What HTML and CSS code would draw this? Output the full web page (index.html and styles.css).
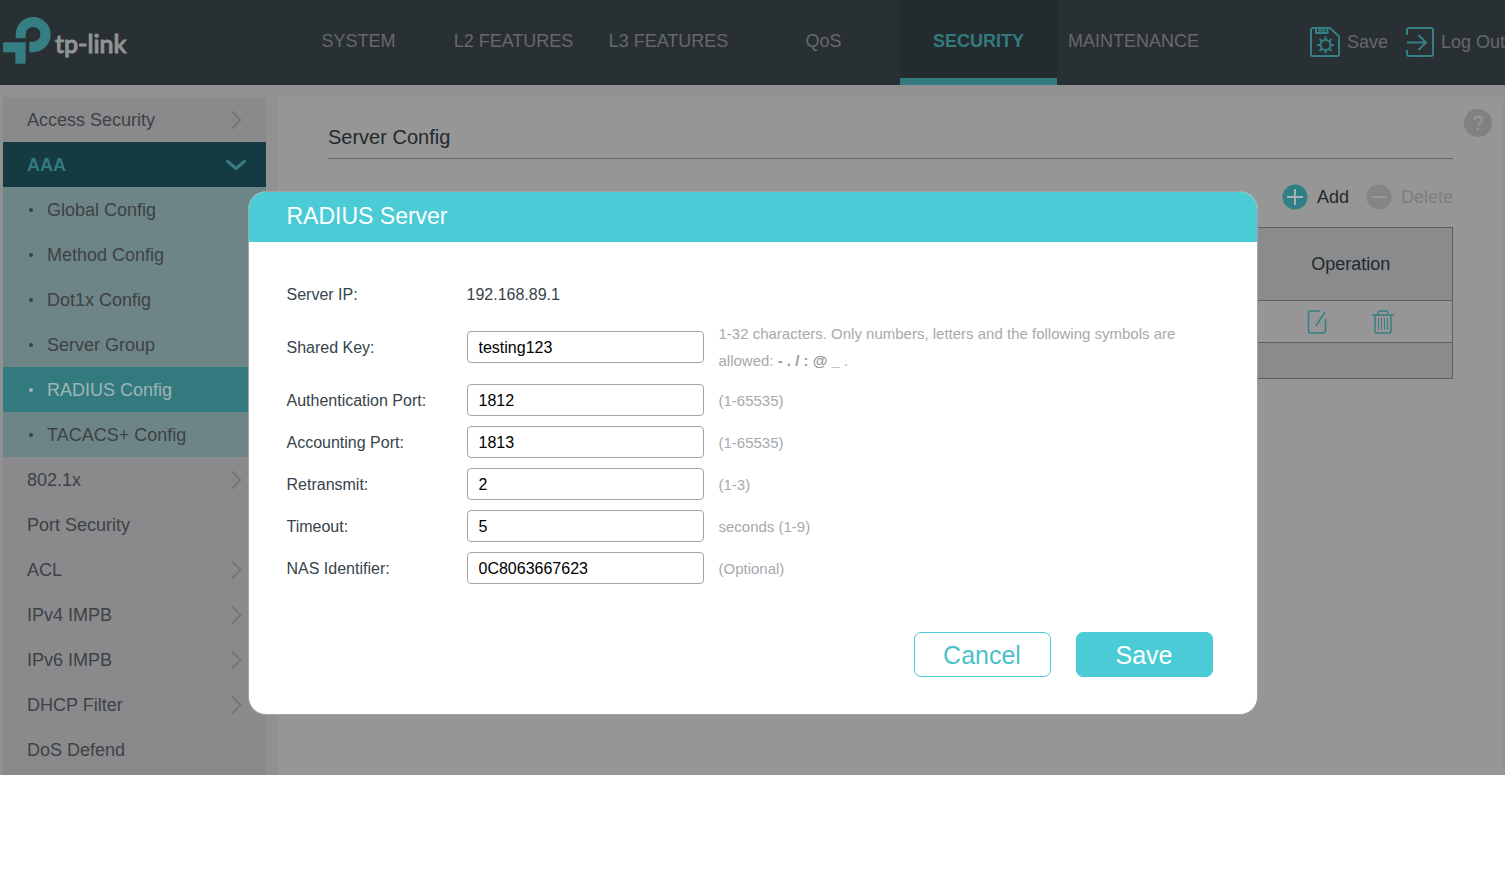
FILE: index.html
```html
<!DOCTYPE html>
<html lang="en">
<head>
<meta charset="utf-8">
<title>RADIUS Config</title>
<link rel="stylesheet" href="styles.css">
</head>
<body>
<div class="app">
  <header class="topbar">
    <a class="logo" href="#">
      <svg width="52" height="50" viewBox="0 16 52 50" fill="#357f84" aria-hidden="true">
        <path d="M15.7 38.3V34.5A17.5 17.6 0 1 1 33.2 52.2H29.3V41.7H33A7.4 7.4 0 1 0 25.7 34.4V38.3Z"/>
        <path d="M4 42.3H25.7V62.7Q25.7 63.8 24.6 63.8H16.3Q15.3 63.8 15.3 62.7V52.2H4Q3 52.2 3 51.2V43.3Q3 42.3 4 42.3Z"/>
      </svg>
      <span class="logo-name">tp-link</span>
    </a>
    <nav class="mainnav">
      <a href="#">SYSTEM</a>
      <a href="#">L2 FEATURES</a>
      <a href="#">L3 FEATURES</a>
      <a href="#">QoS</a>
      <a class="active" href="#">SECURITY</a>
      <a href="#">MAINTENANCE</a>
    </nav>
    <div class="session">
      <button type="button">
        <svg width="30" height="30" viewBox="0 0 30 30" fill="none" stroke="#357f84" stroke-width="2" aria-hidden="true">
          <path d="M3 1H20L29 9.5V27.5Q29 29 27.5 29H2.5Q1 29 1 27.5V3Q1 1 3 1Z"/>
          <path d="M6 1V6H17.500V1M8 3.500H15.500"/>
          <circle cx="15.500" cy="18" r="5"/>
          <path d="M15.500 13V9.500M15.500 23V26.500M10.500 18H7M20.500 18H24M12 14.500L9.500 12M19 14.500L21.500 12M12 21.500L9.500 24M19 21.500L21.500 24"/>
        </svg>
        <span>Save</span>
      </button>
      <button type="button">
        <svg width="28" height="30" viewBox="0 0 28 30" fill="none" stroke="#357f84" stroke-width="2" aria-hidden="true">
          <path d="M1 8V3Q1 1 3 1H25Q27 1 27 3V27Q27 29 25 29H3Q1 29 1 27V23"/>
          <path d="M1 15.500H20M12.500 8L20 15.500L12.500 23"/>
        </svg>
        <span>Log Out</span>
      </button>
    </div>
  </header>

  <div class="layout">
    <nav class="sidebar">
      <a class="item" href="#">Access Security<svg class="chev" viewBox="0 0 12 22"><path d="M1.500 2L10.500 11L1.500 20"/></svg></a>
      <a class="item open" href="#">AAA<svg class="chev-down" viewBox="0 0 22 12"><path d="M1.500 1.500L11 9.500L20.500 1.500"/></svg></a>
      <ul class="submenu">
        <li><a href="#">Global Config</a></li>
        <li><a href="#">Method Config</a></li>
        <li><a href="#">Dot1x Config</a></li>
        <li><a href="#">Server Group</a></li>
        <li><a class="current" href="#">RADIUS Config</a></li>
        <li><a href="#">TACACS+ Config</a></li>
      </ul>
      <a class="item" href="#">802.1x<svg class="chev" viewBox="0 0 12 22"><path d="M1.500 2L10.500 11L1.500 20"/></svg></a>
      <a class="item" href="#">Port Security</a>
      <a class="item" href="#">ACL<svg class="chev" viewBox="0 0 12 22"><path d="M1.500 2L10.500 11L1.500 20"/></svg></a>
      <a class="item" href="#">IPv4 IMPB<svg class="chev" viewBox="0 0 12 22"><path d="M1.500 2L10.500 11L1.500 20"/></svg></a>
      <a class="item" href="#">IPv6 IMPB<svg class="chev" viewBox="0 0 12 22"><path d="M1.500 2L10.500 11L1.500 20"/></svg></a>
      <a class="item" href="#">DHCP Filter<svg class="chev" viewBox="0 0 12 22"><path d="M1.500 2L10.500 11L1.500 20"/></svg></a>
      <a class="item" href="#">DoS Defend</a>
    </nav>

    <main class="panel">
      <section class="content">
        <h1>Server Config</h1>
        <div class="tools">
          <button type="button" class="add">
            <svg width="26" height="26" viewBox="0 0 26 26" aria-hidden="true"><circle cx="13" cy="13" r="12.500" fill="#2f8086"/><path d="M13 5V21M5 13H21" stroke="#a3b2b3" stroke-width="2"/></svg>
            <span>Add</span>
          </button>
          <button type="button" class="delete" disabled>
            <svg width="26" height="26" viewBox="0 0 26 26" aria-hidden="true"><circle cx="13" cy="13" r="12.500" fill="#848686"/><path d="M5.500 13H20.500" stroke="#999" stroke-width="2"/></svg>
            <span>Delete</span>
          </button>
        </div>
        <table class="servers">
          <thead><tr><th></th><th class="op">Operation</th></tr></thead>
          <tbody>
            <tr><td></td><td>
              <div class="actions">
                <button type="button" aria-label="Edit">
                  <svg width="20" height="24" viewBox="0 0 20 24" fill="none" stroke="#357f84" stroke-width="1.500"><path d="M13 1H4Q1.500 1 1.500 3.500V20.500Q1.500 23 4 23H16Q18.500 23 18.500 20.500V9M18 2L9 16"/></svg>
                </button>
                <button type="button" aria-label="Remove">
                  <svg width="22" height="24" viewBox="0 0 22 24" fill="none" stroke="#357f84" stroke-width="1.500"><path d="M0 5H22M6 5V3Q6 1 8 1H14Q16 1 16 3V5M3 5V21Q3 23 5 23H17Q19 23 19 21V5"/><path stroke-width="1" d="M6.500 8V19.500M9.500 8V19.500M12.500 8V19.500M15.500 8V19.500"/></svg>
                </button>
              </div>
            </td></tr>
          </tbody>
          <tfoot><tr><td colspan="2"></td></tr></tfoot>
        </table>
      </section>
      <aside class="help"><button type="button" aria-label="Help">?</button></aside>
    </main>
  </div>

  <div class="overlay">
    <form class="dialog" role="dialog" aria-labelledby="dialog-title">
      <h2 id="dialog-title">RADIUS Server</h2>
      <div class="fields">
        <div class="row"><span class="name">Server IP:</span><span class="name">192.168.89.1</span></div>
        <div class="row tall"><label class="name" for="key">Shared Key:</label><input id="key" type="text" value="testing123"><p class="hint">1-32 characters. Only numbers, letters and the following symbols are allowed: <b>- . / : @ _</b> .</p></div>
        <div class="row"><label class="name" for="auth">Authentication Port:</label><input id="auth" type="text" value="1812"><p class="hint">(1-65535)</p></div>
        <div class="row"><label class="name" for="acct">Accounting Port:</label><input id="acct" type="text" value="1813"><p class="hint">(1-65535)</p></div>
        <div class="row"><label class="name" for="retry">Retransmit:</label><input id="retry" type="text" value="2"><p class="hint">(1-3)</p></div>
        <div class="row"><label class="name" for="timeout">Timeout:</label><input id="timeout" type="text" value="5"><p class="hint">seconds (1-9)</p></div>
        <div class="row"><label class="name" for="nas">NAS Identifier:</label><input id="nas" type="text" value="0C8063667623"><p class="hint">(Optional)</p></div>
      </div>
      <div class="buttons">
        <button type="button" class="cancel">Cancel</button>
        <button type="submit" class="save">Save</button>
      </div>
    </form>
  </div>
</div>
</body>
</html>
```
FILE: styles.css
```css
* { box-sizing: border-box; }
body {
  margin: 0;
  background: #fff;
  font: 18px/20px "Liberation Sans", Arial, sans-serif;
  color: #3c4245;
}
a { color: inherit; text-decoration: none; }
button { font: inherit; color: inherit; background: none; border: 0; padding: 0; }
.app { position: relative; background: #919191; }

/* Top bar */
.topbar { display: flex; background: #293033; color: #65696b; height: 85px; }
.logo { flex: 0 0 281px; display: flex; align-items: flex-start; gap: 3px; padding-top: 16px; }
.logo-name { font: 500 25px/54px Lato, sans-serif; color: #909494; -webkit-text-stroke: 1px #909494; }
.mainnav { display: grid; grid-template-columns: repeat(6, 155px); }
.mainnav a { text-align: center; padding-top: 31px; border-bottom: 7px solid transparent; }
.mainnav .active {
  margin: 0 -1px;
  background: #242b2e;
  border-color: #337a7f;
  color: #337a7f;
  font-weight: bold;
}
.session { margin-left: auto; display: flex; gap: 18px; padding-top: 27px; white-space: nowrap; }
.session button { display: flex; align-items: center; gap: 7px; height: 30px; }

/* Sidebar */
.layout { display: flex; gap: 12px; padding: 12px 2px 0 3px; }
.sidebar { flex: 0 0 263px; background: #8a8a8c; padding-bottom: 3px; }
.item { display: flex; align-items: center; justify-content: space-between; height: 45px; padding: 0 24px; }
.item svg { fill: none; stroke: #747678; stroke-width: 2; }
.chev { width: 12px; height: 22px; }
.item.open { background: #153a42; color: #337a7f; font-weight: bold; padding-right: 19px; }
.chev-down { width: 22px; height: 12px; }
.item.open svg { stroke: #357f84; stroke-width: 3; }
.submenu { list-style: none; margin: 0; padding: 0; background: #6e8587; }
.submenu a { display: flex; align-items: center; gap: 14px; height: 45px; padding-left: 26px; }
.submenu a::before { content: ""; width: 4px; height: 4px; border-radius: 50%; background: currentColor; }
.submenu .current { background: #337a7f; color: #a0b4b6; }

/* Page panel */
.panel { flex: 1; display: flex; background: #969696; padding-left: 50px; }
.content { flex: 1; }
h1 { margin: 0; padding: 28px 0 9px; font-size: 20px; line-height: 24px; font-weight: normal; border-bottom: 1px solid #666; color: #23292c; }
.tools { display: flex; justify-content: flex-end; gap: 17px; padding: 25px 0 17px; }
.tools button { display: flex; align-items: center; gap: 9px; }
.add { color: #23292c; }
.delete { color: #7c7e80; }
.servers { width: 100%; border: 1px solid #5e6061; border-collapse: collapse; table-layout: fixed; color: #23292c; }
.servers th, .servers td { padding: 0; border-top: 1px solid #5e6061; border-bottom: 1px solid #5e6061; }
.servers th { height: 73px; background: #898b8d; font-weight: normal; }
.servers .op { width: 203px; }
.servers td { height: 42px; }
.servers tfoot td { height: 36px; background: #898b8d; }
.actions { display: flex; justify-content: center; gap: 45px; }
.actions button, .actions svg { display: block; }
.help { flex: 0 0 50px; padding: 12px 0 0 11px; }
.help button { width: 28px; height: 28px; border-radius: 50%; background: #808183; color: #9a9a9a; font-size: 20px; }

/* Dialog */
.overlay { position: absolute; inset: 0; display: flex; justify-content: center; align-items: flex-start; padding-top: 191px; }
.dialog {
  width: 1010px;
  max-width: 100%;
  border: 1px solid #a2a4a4;
  border-radius: 18px;
  background: #fff;
  overflow: hidden;
  font-size: 16px;
  color: #36444b;
}
h2 { margin: 0; padding: 0 38px 2px; background: #4acbd6; color: #fff; font-size: 23px; line-height: 48px; font-weight: normal; }
.fields { padding: 31px 38px 0; }
.row { display: grid; grid-template-columns: 165px 237px 460px; column-gap: 15px; align-items: center; min-height: 42px; }
.row.tall { min-height: 64px; }
.name { padding-top: 2px; }
.row input {
  height: 32px;
  width: 100%;
  border: 1px solid #a2a4a4;
  border-radius: 4px;
  padding: 2px 11px 0;
  font: inherit;
  color: #000;
}
.hint { margin: 0; font-size: 15px; line-height: 27px; color: #a7a9ac; }
.hint b { color: #98999c; }
.buttons { display: flex; justify-content: flex-end; gap: 25px; padding: 43px 44px 37px; }
.buttons button { width: 137px; height: 45px; border: 1px solid #4acbd6; border-radius: 7px; font-size: 25px; line-height: 30px; }
.cancel { color: #4dc0ca; }
.save { background: #4acbd6; color: #fff; }
```
